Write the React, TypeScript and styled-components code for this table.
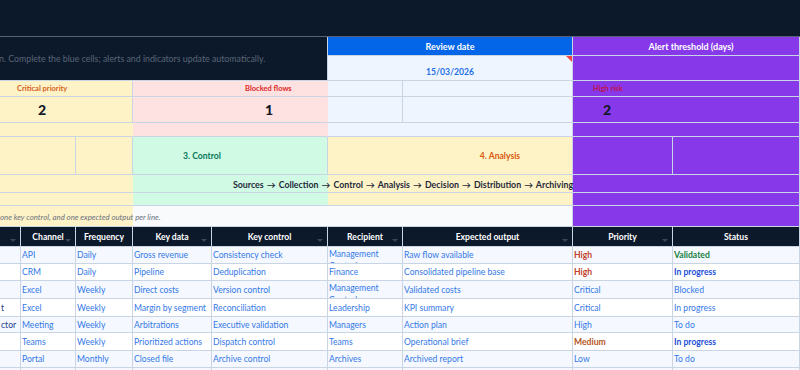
import React from "react"
import styled, { createGlobalStyle } from "styled-components"

const NAVY = "#0c192b"
const LINE = "#c9d5e3"
const BLUE = "#0366e8"
const PURPLE = "#8739e9"
const ICE = "#eef5ff"
const CREAM = "#fef3c7"
const ROSE = "#fee2e2"
const MINT = "#d1fae5"
const MIST = "#f8fafc"
const INK = "#3378e6"

const COLS = "21px 55px 57px 79px 116px 75px 170px 100px 127px"

const GlobalStyle = createGlobalStyle`
  html, body {
    margin: 0;
    padding: 0;
    background: #ffffff;
  }
  body {
    font-family: Lato, "Liberation Sans", sans-serif;
  }
  * {
    box-sizing: border-box;
  }
`

const Page = styled.div`
  width: 800px;
  height: 370px;
  overflow: hidden;
  background: #ffffff;
`

const Board = styled.div`
  display: grid;
  grid-template-columns: ${COLS};
  grid-template-rows: 37px 19px 25px 16px 26px 14px 38px 18px 13px 21px;
`

const Banner = styled.div`
  grid-area: 1 / 1 / 2 / -1;
  background: ${NAVY};
  border-bottom: 1px solid #566173;
`

const Block = styled.div<{ $area: string; $bg: string; $flush?: boolean }>`
  grid-area: ${(p) => p.$area};
  background: ${(p) => p.$bg};
  border-right: 1px solid ${(p) => (p.$flush ? "transparent" : LINE)};
  border-bottom: 1px solid ${LINE};
  display: flex;
  align-items: center;
  min-width: 0;
  overflow: hidden;
  white-space: nowrap;
`

const Intro = styled(Block)`
  color: #5a6576;
  font-size: 8.8px;
  margin-left: -1px;
`

const HeadBand = styled(Block)<{ $lead?: number }>`
  justify-content: center;
  padding-left: ${(p) => p.$lead || 0}px;
  color: #ffffff;
  font-size: 9px;
  font-weight: 700;
`

const DateCell = styled(Block)`
  position: relative;
  justify-content: center;
  align-items: flex-end;
  padding-bottom: 3px;
  color: #1f6fe5;
  font-size: 8.6px;
  font-weight: 700;
  &::after {
    content: "";
    position: absolute;
    top: 0;
    right: 0;
    border-top: 6px solid #ef4444;
    border-left: 6px solid transparent;
  }
`

const KpiLabel = styled(Block)<{ $tone: string; $indent: number }>`
  color: ${(p) => p.$tone};
  padding-left: ${(p) => p.$indent}px;
  font-size: 7.5px;
  font-weight: 700;
`

const KpiValue = styled(Block)<{ $indent: number }>`
  color: #111827;
  padding-left: ${(p) => p.$indent}px;
  font-size: 14px;
  font-weight: 900;
`

const Stage = styled(Block)<{ $tone: string; $offset: number }>`
  justify-content: center;
  padding-left: ${(p) => Math.max(p.$offset, 0) * 2}px;
  padding-right: ${(p) => Math.max(-p.$offset, 0) * 2}px;
  color: ${(p) => p.$tone};
  font-size: 8.6px;
  font-weight: 700;
`

const FlowLine = styled.div`
  grid-area: 8 / 4 / 9 / 9;
  z-index: 1;
  display: flex;
  align-items: center;
  justify-content: center;
  white-space: nowrap;
  color: #1e293b;
  font-size: 8.8px;
  font-weight: 700;
  word-spacing: 1px;
`

const Note = styled.div`
  grid-area: 10 / 1 / 11 / 8;
  z-index: 1;
  display: flex;
  align-items: center;
  white-space: nowrap;
  color: #6b7280;
  font-size: 7.8px;
  font-style: italic;
`

const Table = styled.div`
  display: grid;
  grid-template-columns: ${COLS};
  grid-template-rows: 20px 17px 17px 18px 18px 16px 18px 17px 17px;
`

const HeadCell = styled.div<{ $filter?: boolean }>`
  position: relative;
  background: ${NAVY};
  color: #ffffff;
  font-size: 8.6px;
  font-weight: 700;
  display: flex;
  align-items: center;
  justify-content: center;
  border-right: 1px solid ${LINE};
  border-bottom: 1px solid ${LINE};
  white-space: nowrap;
  overflow: hidden;
  &::after {
    content: "";
    display: ${(p) => (p.$filter ? "block" : "none")};
    position: absolute;
    right: 4px;
    bottom: 4px;
    border-top: 3px solid #3b4658;
    border-left: 3px solid transparent;
    border-right: 3px solid transparent;
  }
`

const DataCell = styled.div<{
  $stripe: boolean
  $tone?: string
  $strong?: boolean
  $wrap?: boolean
}>`
  background: ${(p) => (p.$stripe ? "#f5f9ff" : "#ffffff")};
  color: ${(p) => p.$tone || INK};
  font-size: 8.6px;
  font-weight: ${(p) => (p.$strong ? 700 : 400)};
  border-right: 1px solid ${LINE};
  border-bottom: 1px solid ${LINE};
  padding-left: 1px;
  display: flex;
  align-items: ${(p) => (p.$wrap ? "flex-start" : "center")};
  line-height: ${(p) => (p.$wrap ? "12px" : "normal")};
  padding-top: ${(p) => (p.$wrap ? "1px" : "0")};
  white-space: ${(p) => (p.$wrap ? "normal" : "nowrap")};
  overflow: hidden;
  min-width: 0;
`

type Mark = { text: string; tone?: string; strong?: boolean }

interface Line {
  lead: string
  channel: string
  frequency: string
  data: string
  control: string
  recipient: string
  output: string
  priority: Mark
  status: Mark
}

const HIGH = "#c2412d"
const MEDIUM = "#b4531a"
const GREEN = "#15803d"
const DEEP = "#1d4ed8"

const lines: Line[] = [
  {
    lead: "",
    channel: "API",
    frequency: "Daily",
    data: "Gross revenue",
    control: "Consistency check",
    recipient: "Management Control",
    output: "Raw flow available",
    priority: { text: "High", tone: HIGH, strong: true },
    status: { text: "Validated", tone: GREEN, strong: true }
  },
  {
    lead: "",
    channel: "CRM",
    frequency: "Daily",
    data: "Pipeline",
    control: "Deduplication",
    recipient: "Finance",
    output: "Consolidated pipeline base",
    priority: { text: "High", tone: HIGH, strong: true },
    status: { text: "In progress", tone: DEEP, strong: true }
  },
  {
    lead: "",
    channel: "Excel",
    frequency: "Weekly",
    data: "Direct costs",
    control: "Version control",
    recipient: "Management Control",
    output: "Validated costs",
    priority: { text: "Critical" },
    status: { text: "Blocked" }
  },
  {
    lead: "t",
    channel: "Excel",
    frequency: "Weekly",
    data: "Margin by segment",
    control: "Reconciliation",
    recipient: "Leadership",
    output: "KPI summary",
    priority: { text: "Critical" },
    status: { text: "In progress" }
  },
  {
    lead: "ctor",
    channel: "Meeting",
    frequency: "Weekly",
    data: "Arbitrations",
    control: "Executive validation",
    recipient: "Managers",
    output: "Action plan",
    priority: { text: "High" },
    status: { text: "To do" }
  },
  {
    lead: "",
    channel: "Teams",
    frequency: "Weekly",
    data: "Prioritized actions",
    control: "Dispatch control",
    recipient: "Teams",
    output: "Operational brief",
    priority: { text: "Medium", tone: MEDIUM, strong: true },
    status: { text: "In progress", tone: DEEP, strong: true }
  },
  {
    lead: "",
    channel: "Portal",
    frequency: "Monthly",
    data: "Closed file",
    control: "Archive control",
    recipient: "Archives",
    output: "Archived report",
    priority: { text: "Low" },
    status: { text: "To do" }
  }
]

const headers = [
  { label: "", filter: true },
  { label: "Channel", filter: true },
  { label: "Frequency", filter: false },
  { label: "Key data", filter: true },
  { label: "Key control", filter: true },
  { label: "Recipient", filter: true },
  { label: "Expected output", filter: true },
  { label: "Priority", filter: true },
  { label: "Status", filter: false }
]

const App = () => {
  return (
    <Page>
      <GlobalStyle />
      <Board>
        <Banner />
        <Intro $area="2 / 1 / 4 / 6" $bg={NAVY}>
          n. Complete the blue cells; alerts and indicators update automatically.
        </Intro>
        <HeadBand $area="2 / 6 / 3 / 8" $bg={BLUE}>
          Review date
        </HeadBand>
        <HeadBand $area="2 / 8 / 3 / 10" $bg={PURPLE} $lead={10}>
          Alert threshold (days)
        </HeadBand>
        <DateCell $area="3 / 6 / 4 / 8" $bg={ICE}>
          15/03/2026
        </DateCell>
        <Block $area="3 / 8 / 4 / 10" $bg={PURPLE} />

        <KpiLabel $area="4 / 1 / 5 / 4" $bg={CREAM} $tone="#d4601c" $indent={17}>
          Critical priority
        </KpiLabel>
        <KpiLabel $area="4 / 4 / 5 / 6" $bg={ROSE} $tone="#dc2626" $indent={112} $flush>
          Blocked flows
        </KpiLabel>
        <Block $area="4 / 6 / 5 / 7" $bg={ICE} />
        <Block $area="4 / 7 / 5 / 8" $bg={ICE} />
        <KpiLabel $area="4 / 8 / 5 / 10" $bg={PURPLE} $tone="#c0134f" $indent={20}>
          High risk
        </KpiLabel>

        <KpiValue $area="5 / 1 / 6 / 4" $bg={CREAM} $indent={38}>
          2
        </KpiValue>
        <KpiValue $area="5 / 4 / 6 / 6" $bg={ROSE} $indent={132} $flush>
          1
        </KpiValue>
        <Block $area="5 / 6 / 6 / 7" $bg={ICE} />
        <Block $area="5 / 7 / 6 / 8" $bg={ICE} />
        <KpiValue $area="5 / 8 / 6 / 10" $bg={PURPLE} $indent={30}>
          2
        </KpiValue>

        <Block $area="6 / 1 / 7 / 4" $bg={CREAM} $flush />
        <Block $area="6 / 4 / 7 / 6" $bg={ROSE} $flush />
        <Block $area="6 / 6 / 7 / 8" $bg={ICE} />
        <Block $area="6 / 8 / 7 / 10" $bg={PURPLE} />

        <Block $area="7 / 1 / 8 / 3" $bg={CREAM} />
        <Block $area="7 / 3 / 8 / 4" $bg={CREAM} />
        <Stage $area="7 / 4 / 8 / 6" $bg={MINT} $tone="#047857" $offset={-28}>
          3. Control
        </Stage>
        <Stage $area="7 / 6 / 8 / 8" $bg={CREAM} $tone="#d9590f" $offset={50}>
          4. Analysis
        </Stage>
        <Block $area="7 / 8 / 8 / 9" $bg={PURPLE} />
        <Block $area="7 / 9 / 8 / 10" $bg={PURPLE} />

        <Block $area="8 / 1 / 9 / 4" $bg={CREAM} $flush />
        <Block $area="8 / 4 / 9 / 6" $bg={MINT} $flush />
        <Block $area="8 / 6 / 9 / 8" $bg={CREAM} />
        <Block $area="8 / 8 / 9 / 10" $bg={PURPLE} />
        <FlowLine>
          Sources → Collection → Control → Analysis → Decision → Distribution → Archiving
        </FlowLine>

        <Block $area="9 / 1 / 10 / 4" $bg={CREAM} $flush />
        <Block $area="9 / 4 / 10 / 6" $bg={MINT} $flush />
        <Block $area="9 / 6 / 10 / 8" $bg={CREAM} />
        <Block $area="9 / 8 / 10 / 10" $bg={PURPLE} />

        <Block $area="10 / 1 / 11 / 4" $bg={CREAM} $flush />
        <Block $area="10 / 4 / 11 / 8" $bg={MIST} />
        <Block $area="10 / 8 / 11 / 10" $bg={PURPLE} />
        <Note>one key control, and one expected output per line.</Note>
      </Board>

      <Table>
        {headers.map((h, i) => (
          <HeadCell key={i} $filter={h.filter}>
            {h.label}
          </HeadCell>
        ))}
        {lines.map((line, r) => {
          const stripe = r % 2 === 0
          return (
            <React.Fragment key={r}>
              <DataCell $stripe={stripe} $tone="#1e3a8a">
                {line.lead}
              </DataCell>
              <DataCell $stripe={stripe}>{line.channel}</DataCell>
              <DataCell $stripe={stripe}>{line.frequency}</DataCell>
              <DataCell $stripe={stripe}>{line.data}</DataCell>
              <DataCell $stripe={stripe}>{line.control}</DataCell>
              <DataCell $stripe={stripe} $wrap={line.recipient.length > 12}>
                {line.recipient}
              </DataCell>
              <DataCell $stripe={stripe}>{line.output}</DataCell>
              <DataCell
                $stripe={stripe}
                $tone={line.priority.tone}
                $strong={line.priority.strong}
              >
                {line.priority.text}
              </DataCell>
              <DataCell
                $stripe={stripe}
                $tone={line.status.tone}
                $strong={line.status.strong}
              >
                {line.status.text}
              </DataCell>
            </React.Fragment>
          )
        })}
        {headers.map((_, i) => (
          <DataCell key={`tail-${i}`} $stripe={true} />
        ))}
      </Table>
    </Page>
  )
}

export default App
